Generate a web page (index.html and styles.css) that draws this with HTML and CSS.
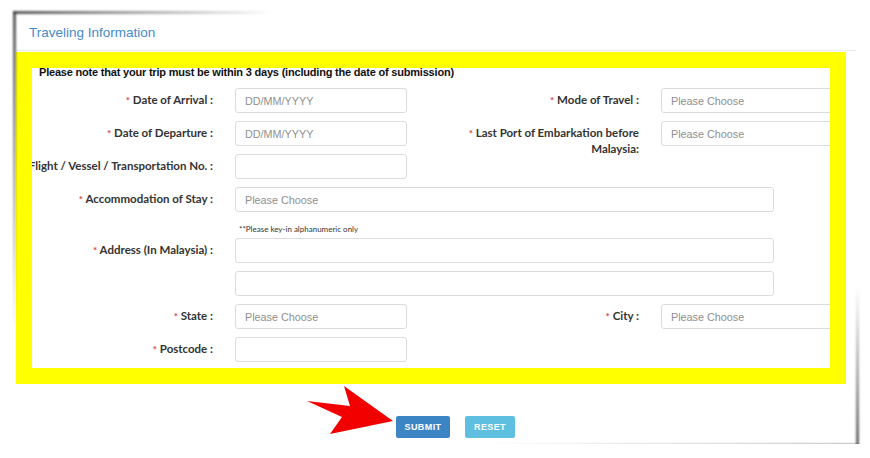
FILE: index.html
```html
<!DOCTYPE html>
<html lang="en">
<head>
  <meta charset="UTF-8" />
  <meta name="viewport" content="width=device-width, initial-scale=1.0" />
  <title>Traveling Information</title>
  <link rel="stylesheet" href="styles.css">
</head>
<body>
  <div class="panel">
    <div class="panel-heading">Traveling Information</div>

    <div class="highlight">
      <div class="form-body">
        <p class="notice">Please note that your trip must be within 3 days (including the date of submission)</p>

        <div class="row">
          <label class="lbl"><span><span class="req">*</span> Date of Arrival :</span></label>
          <input class="field" placeholder="DD/MM/YYYY">
          <label class="lbl"><span><span class="req">*</span> Mode of Travel :</span></label>
          <input class="field" placeholder="Please Choose">
        </div>

        <div class="row">
          <label class="lbl"><span><span class="req">*</span> Date of Departure :</span></label>
          <input class="field" placeholder="DD/MM/YYYY">
          <label class="lbl multi"><span class="req">*</span> Last Port of Embarkation before Malaysia:</label>
          <input class="field" placeholder="Please Choose">
        </div>

        <div class="row">
          <label class="lbl"><span>Flight / Vessel / Transportation No. :</span></label>
          <input class="field">
        </div>

        <div class="row">
          <label class="lbl"><span><span class="req">*</span> Accommodation of Stay :</span></label>
          <input class="field wide" placeholder="Please Choose">
        </div>

        <div class="hint">**Please key-in alphanumeric only</div>

        <div class="row">
          <label class="lbl"><span><span class="req">*</span> Address (In Malaysia) :</span></label>
          <input class="field wide">
        </div>

        <div class="row">
          <span class="lbl"></span>
          <input class="field wide">
        </div>

        <div class="row">
          <label class="lbl"><span><span class="req">*</span> State :</span></label>
          <input class="field" placeholder="Please Choose">
          <label class="lbl"><span><span class="req">*</span> City :</span></label>
          <input class="field" placeholder="Please Choose">
        </div>

        <div class="row">
          <label class="lbl"><span><span class="req">*</span> Postcode :</span></label>
          <input class="field">
        </div>
      </div>
    </div>

    <div class="actions">
      <button class="btn submit">SUBMIT</button>
      <button class="btn reset">RESET</button>
    </div>

    <svg class="arrow" width="90" height="52" viewBox="0 0 90 52">
      <polygon points="1,17 44,22 38,2 87,37 24,50 36,33" fill="#f20000"/>
    </svg>
  </div>
</body>
</html>
```

FILE: styles.css
```css
body {
  margin: 0;
  background-color: #fff;
  font-family: "Liberation Sans", Arial, sans-serif;
}

.panel {
  position: relative;
  width: 840px;
  height: 430px;
  margin: 14px 0 0 16px;
  background-color: #fff;
}

/* curled paper shadows */
.panel::before {
  content: "";
  position: absolute;
  left: -3px;
  top: -3px;
  width: 260px;
  height: 320px;
  background:
    linear-gradient(to bottom, rgba(60,60,60,0.85), rgba(60,60,60,0)) left top / 3px 100% no-repeat,
    linear-gradient(to right, rgba(60,60,60,0.85), rgba(60,60,60,0)) left top / 100% 3px no-repeat;
  filter: blur(0.8px);
}

.panel::after {
  content: "";
  position: absolute;
  right: -3px;
  bottom: -3px;
  width: 380px;
  height: 160px;
  background:
    linear-gradient(to top, rgba(60,60,60,0.8), rgba(60,60,60,0)) right bottom / 3px 100% no-repeat,
    linear-gradient(to left, rgba(60,60,60,0.8), rgba(60,60,60,0)) right bottom / 100% 3px no-repeat;
  filter: blur(0.8px);
}

.panel-heading {
  height: 36px;
  line-height: 37px;
  padding-left: 13px;
  font-size: 13.5px;
  color: #428bca;
  border-bottom: 1px solid #e6ebf1;
}

.highlight {
  width: 798px;
  margin-top: 1px;
  border: 16px solid #ffff00;
}

.form-body {
  height: 300px;
  padding-left: 1px;
  overflow: hidden;
  background-color: #fff;
}

.notice {
  margin: -4px 0 8px 6px;
  line-height: 16px;
  font-size: 11px;
  font-weight: bold;
  letter-spacing: -0.2px;
  color: #111;
  white-space: nowrap;
}

.row {
  display: grid;
  grid-template-columns: 180px 172px 210px 172px;
  column-gap: 22px;
  height: 25px;
  margin-bottom: 8px;
}

.lbl {
  display: flex;
  justify-content: flex-end;
  padding-top: 4px;
  line-height: 16px;
  font-family: Lato, "Liberation Sans", sans-serif;
  font-size: 11.5px;
  font-weight: bold;
  color: #333;
  white-space: nowrap;
}

.lbl > span {
  flex-shrink: 0;
}

.lbl.multi {
  display: block;
  padding-left: 30px;
  text-align: right;
  white-space: normal;
}

.req {
  color: #d9443f;
  font-size: 10px;
}

.field {
  box-sizing: border-box;
  height: 25px;
  padding: 0 9px;
  border: 1px solid #dcdcdc;
  border-radius: 3px;
  font-family: "Liberation Sans", Arial, sans-serif;
  font-size: 10.8px;
  color: #555;
  background-color: #fff;
}

.field::placeholder {
  color: #8f8f8f;
}

.field.wide {
  grid-column: 2 / 5;
  width: 539px;
}

.hint {
  height: 18px;
  line-height: 18px;
  padding-left: 206px;
  font-family: Lato, "Liberation Sans", sans-serif;
  font-size: 8px;
  color: #333;
}

.actions {
  display: flex;
  gap: 15px;
  padding: 32px 0 0 380px;
}

.btn {
  height: 22px;
  border: none;
  border-radius: 2px;
  color: #fff;
  font-family: "Liberation Sans", Arial, sans-serif;
  font-size: 9px;
  font-weight: bold;
  letter-spacing: 0.4px;
}

.btn.submit {
  width: 54px;
  background-color: #3b85c4;
}

.btn.reset {
  width: 50px;
  background-color: #5ebfe0;
}

.arrow {
  position: absolute;
  left: 290px;
  top: 370px;
}
```
